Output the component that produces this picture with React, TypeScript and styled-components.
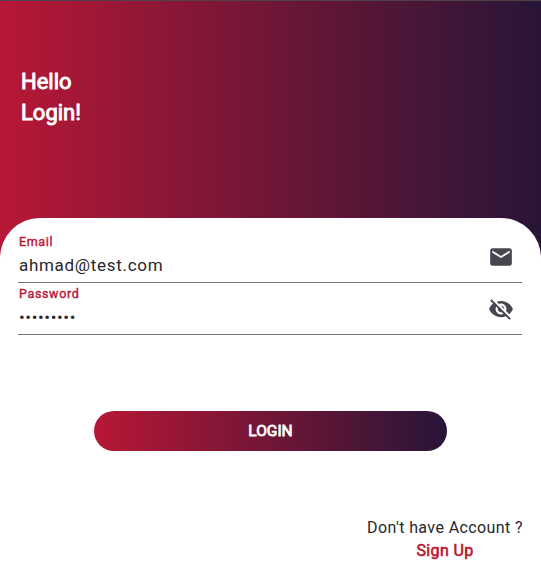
import React from 'react';
import styled, { createGlobalStyle } from 'styled-components';

const GlobalStyle = createGlobalStyle`
  * { box-sizing: border-box; }
  body { margin: 0; font-family: Roboto, sans-serif; }
`;

const gradient = 'linear-gradient(90deg, #b81736, #281537)';

const Screen = styled.main`
  display: flex;
  flex-direction: column;
  height: 573px;
  overflow: hidden;
  background: ${gradient};
  border-top: 1px solid #50404a;
  background-origin: border-box;
`;

const Greeting = styled.h1`
  margin: 0;
  height: 217px;
  padding: 65px 0 0 21px;
  color: #fff;
  font-size: 22px;
  font-weight: 400;
  line-height: 31px;
  -webkit-text-stroke: 0.9px #fff;
`;

const GreetingLine = styled.span`
  display: block;
  width: max-content;
`;

const Sheet = styled.form`
  flex: 1;
  display: flex;
  flex-direction: column;
  padding: 13px 18px 0;
  background: #fff;
  border-radius: 40px 40px 0 0;
`;

const Field = styled.label`
  display: flex;
  justify-content: space-between;
  height: 52px;
  margin-right: 0.6px;
  padding: 4px 8px 0 1px;
  border-bottom: 1px solid #77767b;
`;

const FieldText = styled.span`
  display: flex;
  flex-direction: column;
`;

const Caption = styled.span`
  color: #b81736;
  font-size: 12.5px;
  font-weight: 400;
  line-height: 14px;
  letter-spacing: 0.65px;
  -webkit-text-stroke: 0.4px #b81736;
`;

const Value = styled.span<{ $spacing: number }>`
  margin-top: 4px;
  color: #29272c;
  font-size: 17px;
  font-weight: 400;
  line-height: 24px;
  letter-spacing: ${(p) => p.$spacing}px;
`;

const Icon = styled.svg`
  width: 26px;
  height: 26px;
  margin: 9px 0 0;
  fill: #49454f;
`;

const LoginButton = styled.button`
  align-self: center;
  width: 353px;
  height: 40px;
  margin-top: 76px;
  padding: 0;
  border: 0;
  border-radius: 20px;
  background: ${gradient};
  color: #fff;
  font: 400 15.5px/40px Roboto, sans-serif;
  -webkit-text-stroke: 0.8px #fff;
`;

const Footer = styled.footer`
  display: flex;
  flex-direction: column;
  align-self: flex-end;
  align-items: center;
  margin-top: 65px;
  color: #29272c;
  font-size: 16px;
  line-height: 23px;
  letter-spacing: 0.4px;
`;

const SignUp = styled.a`
  color: #b81736;
  font-weight: 400;
  letter-spacing: 0.4px;
  -webkit-text-stroke: 0.6px #b81736;
`;

export default function App() {
  return (
    <>
      <GlobalStyle />
      <Screen>
        <Greeting>
          <GreetingLine>Hello</GreetingLine>
          <GreetingLine>Login!</GreetingLine>
        </Greeting>
        <Sheet>
          <Field>
            <FieldText>
              <Caption>Email</Caption>
              <Value $spacing={0.7}>ahmad@test.com</Value>
            </FieldText>
            <Icon viewBox="0 0 24 24">
              <path d="M20 4H4c-1.1 0-1.99.9-1.99 2L2 18c0 1.1.9 2 2 2h16c1.1 0 2-.9 2-2V6c0-1.1-.9-2-2-2zm0 4-8 5-8-5V6l8 5 8-5v2z" />
            </Icon>
          </Field>
          <Field>
            <FieldText>
              <Caption>Password</Caption>
              <Value $spacing={0.6}>•••••••••</Value>
            </FieldText>
            <Icon viewBox="0 0 24 24">
              <path d="M12 7c2.76 0 5 2.24 5 5 0 .65-.13 1.26-.36 1.83l2.92 2.92c1.51-1.26 2.7-2.89 3.43-4.75-1.73-4.39-6-7.5-11-7.5-1.4 0-2.74.25-3.98.7l2.16 2.16C10.74 7.13 11.35 7 12 7zM2 4.27l2.28 2.28.46.46C3.08 8.3 1.78 10.02 1 12c1.73 4.39 6 7.5 11 7.5 1.55 0 3.03-.3 4.38-.84l.42.42L19.73 22 21 20.73 3.27 3 2 4.27zM7.53 9.8l1.55 1.55c-.05.21-.08.43-.08.65 0 1.66 1.34 3 3 3 .22 0 .44-.03.65-.08l1.55 1.55c-.67.33-1.41.53-2.2.53-2.76 0-5-2.24-5-5 0-.79.2-1.53.53-2.2zm4.31-.78 3.15 3.15.02-.16c0-1.66-1.34-3-3-3l-.17.01z" />
            </Icon>
          </Field>
          <LoginButton type="button">LOGIN</LoginButton>
          <Footer>
            <span>Don't have Account ?</span>
            <SignUp>Sign Up</SignUp>
          </Footer>
        </Sheet>
      </Screen>
    </>
  );
}
